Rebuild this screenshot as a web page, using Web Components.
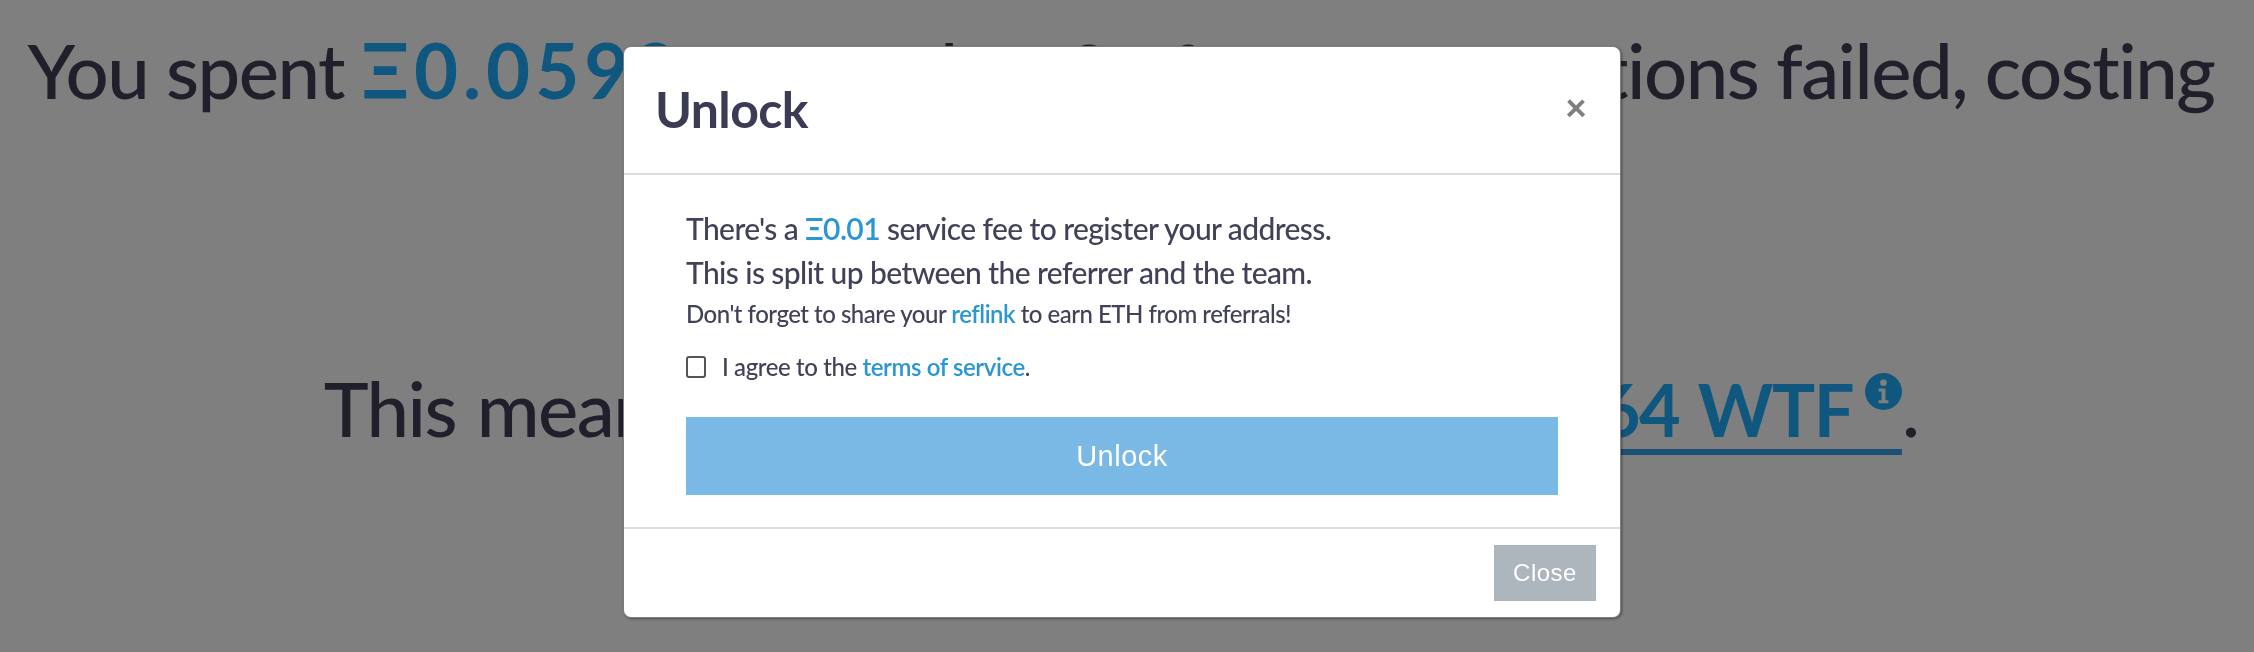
<!DOCTYPE html>
<html>
<head>
<meta charset="utf-8">
<title>Unlock</title>
<style>
    html, body { margin: 0; height: 100%; overflow: hidden; background: #fff; }
</style>
</head>
<body>
<stats-page>
    <stats-line>You spent <b>Ξ0.0592</b> on gas, but 3 of your transactions failed, costing</stats-line>
    <stats-line style="word-spacing: 3px">This means you could have bought <a>11,264 WTF<info-dot></info-dot></a>.</stats-line>
</stats-page>
<page-backdrop>
    <unlock-modal heading="Unlock">
        <big-line>There's a <em>Ξ0.01</em> service fee to register your address.</big-line>
        <big-line>This is split up between the referrer and the team.</big-line>
        <small-line>Don't forget to share your <em>reflink</em> to earn ETH from referrals!</small-line>
        <agree-check>I agree to the <em>terms of service</em>.</agree-check>
        <action-button>Unlock</action-button>
    </unlock-modal>
</page-backdrop>
<script>
const FONT = '"Lato", "Noto Sans", sans-serif';

class StatsPage extends HTMLElement {
    constructor() {
        super();
        this.attachShadow({ mode: 'open' });
        this.shadowRoot.innerHTML = `
            <style>
                :host {
                    display: flex;
                    flex-direction: column;
                    align-items: center;
                    padding: 26px 12px 0 0;
                    gap: 250px;
                    font-family: ${FONT};
                    font-size: 76px;
                    font-weight: 500;
                    line-height: 88px;
                    color: #414158;
                    white-space: nowrap;
                }
            </style>
            <slot></slot>
        `;
    }
}

class StatsLine extends HTMLElement {
    constructor() {
        super();
        this.attachShadow({ mode: 'open' });
        this.shadowRoot.innerHTML = `
            <style>
                :host { display: block; letter-spacing: -1.5px; }
                ::slotted(b) { font-weight: 700; letter-spacing: 5px; color: #20aeff; }
                ::slotted(a) {
                    font-size: 72px;
                    font-weight: 700;
                    color: #20aeff;
                    padding-bottom: 3px;
                    background: linear-gradient(#38a0ea, #38a0ea) left bottom / 100% 6px no-repeat;
                }
            </style>
            <slot></slot>
        `;
    }
}

class InfoDot extends HTMLElement {
    constructor() {
        super();
        this.attachShadow({ mode: 'open' });
        this.shadowRoot.innerHTML = `
            <style>
                :host { display: inline-block; width: 37px; height: 37px; margin-left: 12px; vertical-align: 27px; }
                svg { display: block; width: 100%; height: 100%; }
            </style>
            <svg viewBox="0 0 38 38">
                <circle cx="19" cy="19" r="19" fill="#20aeff"/>
                <circle cx="19" cy="10" r="3.4" fill="#fff"/>
                <path d="M14 16h7v12h3v3H14v-3h3v-9h-3z" fill="#fff"/>
            </svg>
        `;
    }
}

class PageBackdrop extends HTMLElement {
    constructor() {
        super();
        this.attachShadow({ mode: 'open' });
        this.shadowRoot.innerHTML = `
            <style>
                :host {
                    position: fixed;
                    inset: 0;
                    display: block;
                    background: rgba(0,0,0,0.5);
                    padding: 46px 0 0 623px;
                    box-sizing: border-box;
                }
            </style>
            <slot></slot>
        `;
    }
}

class UnlockModal extends HTMLElement {
    constructor() {
        super();
        this.attachShadow({ mode: 'open' });
        this.shadowRoot.innerHTML = `
            <style>
                :host {
                    display: block;
                    box-sizing: border-box;
                    width: 998px;
                    height: 572px;
                    background: #fff;
                    border: 1px solid rgba(0,0,0,0.5);
                    border-radius: 8px;
                    box-shadow: 1px 1px 3px rgba(0,0,0,0.4);
                    font-family: ${FONT};
                    font-weight: 500;
                    color: #414158;
                }
                .head {
                    display: flex;
                    justify-content: space-between;
                    align-items: center;
                    height: 128px;
                    padding: 0 33px 0 31px;
                    box-sizing: border-box;
                    border-bottom: 2px solid #dcdcdc;
                }
                h5 { margin: -2px 0 0; font-size: 50px; font-weight: 700; letter-spacing: -0.6px; color: #3b3b55; }
                .x { margin-top: -8px; font-size: 38px; font-weight: 900; color: #7f7f7f; line-height: 1; }
                .body { padding: 31px 62px 0 62px; height: 352px; box-sizing: border-box; }
                .foot {
                    display: flex;
                    justify-content: flex-end;
                    padding: 16px 24px;
                    box-sizing: border-box;
                    border-top: 2px solid #dcdcdc;
                }
                button {
                    width: 102px;
                    height: 56px;
                    border: 0;
                    padding: 0;
                    background: #adb5bd;
                    color: #fff;
                    font: 24px "Liberation Sans", sans-serif;
                    letter-spacing: 0.5px;
                }
            </style>
            <div class="head"><h5>${this.getAttribute('heading')}</h5><span class="x">×</span></div>
            <div class="body"><slot></slot></div>
            <div class="foot"><button>Close</button></div>
        `;
    }
}

class BigLine extends HTMLElement {
    constructor() {
        super();
        this.attachShadow({ mode: 'open' });
        this.shadowRoot.innerHTML = `
            <style>
                :host { display: block; font-size: 30px; line-height: 44px; letter-spacing: -0.6px; white-space: nowrap; }
                ::slotted(em) { font-style: normal; font-weight: 600; color: #2a96d4; }
            </style>
            <slot></slot>
        `;
    }
}

class SmallLine extends HTMLElement {
    constructor() {
        super();
        this.attachShadow({ mode: 'open' });
        this.shadowRoot.innerHTML = `
            <style>
                :host { display: block; font-size: 24px; line-height: 40px; letter-spacing: -0.5px; white-space: nowrap; }
                ::slotted(em) { font-style: normal; font-weight: 600; color: #2a96d4; }
            </style>
            <slot></slot>
        `;
    }
}

class AgreeCheck extends HTMLElement {
    constructor() {
        super();
        this.attachShadow({ mode: 'open' });
        this.shadowRoot.innerHTML = `
            <style>
                :host { display: flex; align-items: center; gap: 16px; margin-top: 13px; font-size: 24px; line-height: 40px; letter-spacing: -0.4px; white-space: nowrap; }
                ::slotted(em) { font-style: normal; font-weight: 600; color: #2a96d4; }
                .box { width: 16px; height: 18px; border: 2px solid #555; border-radius: 3px; }
            </style>
            <span class="box"></span><span><slot></slot></span>
        `;
    }
}

class ActionButton extends HTMLElement {
    constructor() {
        super();
        this.attachShadow({ mode: 'open' });
        this.shadowRoot.innerHTML = `
            <style>
                :host {
                    display: flex;
                    align-items: center;
                    justify-content: center;
                    height: 78px;
                    margin-top: 30px;
                    background: #7ab9e5;
                    color: #fff;
                    font: 29px "Liberation Sans", sans-serif;
                    letter-spacing: 0.5px;
                }
            </style>
            <slot></slot>
        `;
    }
}

customElements.define('stats-page', StatsPage);
customElements.define('stats-line', StatsLine);
customElements.define('info-dot', InfoDot);
customElements.define('page-backdrop', PageBackdrop);
customElements.define('unlock-modal', UnlockModal);
customElements.define('big-line', BigLine);
customElements.define('small-line', SmallLine);
customElements.define('agree-check', AgreeCheck);
customElements.define('action-button', ActionButton);
</script>
</body>
</html>
